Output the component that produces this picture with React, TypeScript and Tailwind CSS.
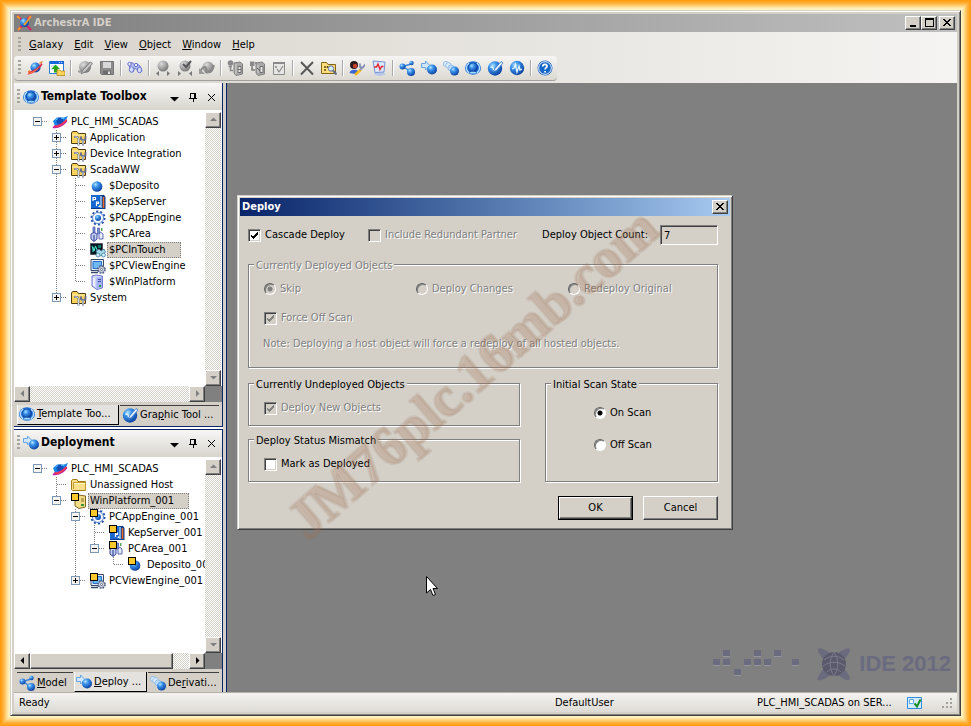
import React, { useState } from "react";

type IconProps = { className?: string };

function Svg({ children, className = "" }: { children: React.ReactNode; className?: string }) {
  return (
    <svg viewBox="0 0 16 16" className={`size-4 shrink-0 ${className}`} aria-hidden="true">
      {children}
    </svg>
  );
}

const icons: Record<string, React.ReactNode> = {
  galaxy: (
    <>
      <circle cx="8.500" cy="7.500" r="5" fill="url(#ball)" />
      <path d="M0.500 14.500C4 15 12 10 15.500 4.500L14.500 3C12 7 6 11.500 2 11.500Z" fill="#e0284a" />
      <path d="M1 13.500C5 13 9 10.500 11 8" stroke="#ff8c3a" strokeWidth="1" fill="none" />
      <path d="M1 12L3 10.500M12.500 3.500L15.500 1.500" stroke="#f08030" strokeWidth="1.500" />
    </>
  ),
  galaxyTree: (
    <>
      <path d="M1 7L5 3.500H12L16 2 13 8 8 12H3Z" fill="#1686e8" />
      <circle cx="8" cy="7" r="3.500" fill="#1250b8" />
      <path d="M3.500 6L6 4.500M9 4L12 4.500" stroke="#5cc8ff" />
      <path d="M0.500 14L2 11.500C6 11.500 12 8 14 5L15.500 7C12 12 6 15 0.500 14Z" fill="#c4209c" />
      <path d="M3 12.500C8 12.500 12 9 14.500 6" stroke="#f43c50" strokeWidth="1.300" fill="none" />
    </>
  ),
  importer: (
    <>
      <path d="M0.500 1.500H14.500V13.500H0.500Z" fill="#fff" stroke="#2c78d8" />
      <path d="M1 1H15V4H1Z" fill="#1768dc" />
      <path d="M10 2.500H14" stroke="#bfe0ff" strokeDasharray="1 1" />
      <path d="M2 6H5M2 9H4" stroke="#a8c8e8" />
      <path d="M6.500 4.500L11 9H8.500C8.500 11.500 9 12 11 12.500H5V9H2.500Z" fill="#25a51d" />
      <path d="M8 10H11L12 11H16V15.500H8Z" fill="#ffd45c" stroke="#b07c10" strokeWidth="0.700" />
    </>
  ),
  editGray: (
    <>
      <circle cx="8" cy="7" r="6" fill="url(#grayBall)" />
      <path d="M1 12C3 14 7 12 9 10L15 3.500 13 1.500 6.500 8C4 11 2 11 1 10Z" fill="#9c9c9c" />
      <path d="M4 14L6 10 13.500 2 15.500 3.500 8.500 11.500Z" fill="#c8c8c8" stroke="#707070" strokeWidth="0.800" />
    </>
  ),
  save: (
    <>
      <path d="M1.500 1.500H14.500V14.500H2.500L1.500 13.500Z" fill="#8c8c8c" stroke="#747474" />
      <path d="M4 2H12V8H4Z" fill="#d8d8d8" />
      <path d="M4 10.500H12V14.500H4Z" fill="#6c6c6c" />
      <path d="M9 11.500H11V14H9Z" fill="#e0e0e0" />
    </>
  ),
  find: (
    <>
      <path d="M2 4L5 2.500 8 5 10 4 13 6 15 11 12 12.500 9.500 9 7.500 8.500 6 12 3 11Z" fill="#b4c0f4" stroke="#6c78cc" />
      <ellipse cx="4.500" cy="9.500" rx="2.200" ry="2.800" fill="#d4dcff" stroke="#6c78cc" />
      <ellipse cx="12.500" cy="10" rx="2.200" ry="2.800" fill="#d4dcff" stroke="#6c78cc" />
      <circle cx="2.500" cy="4" r="1.700" fill="#eef" stroke="#6470c8" />
      <circle cx="9" cy="5" r="1.700" fill="#eef" stroke="#6470c8" />
    </>
  ),
  checkIn: (
    <>
      <circle cx="8" cy="6" r="5.500" fill="url(#grayBall)" />
      <path d="M4 11V16L1 13.500ZM12 11V16L15 13.500Z" fill="#787878" />
    </>
  ),
  checkOut: (
    <>
      <circle cx="8" cy="6" r="5.500" fill="url(#grayBall)" />
      <path d="M1 11V16L4 13.500ZM15 11V16L12 13.500Z" fill="#787878" />
      <path d="M6 4L9 7 14 1" fill="none" stroke="#565656" strokeWidth="2" />
    </>
  ),
  undo: (
    <>
      <circle cx="9" cy="7" r="5.500" fill="url(#grayBall)" />
      <path d="M1 12C3 7 6 6 7 8C8 10 5 12 8 12.500C12 13 14 10 15 5" fill="none" stroke="#8a8a8a" strokeWidth="2" />
      <path d="M0 8V14H6Z" fill="#9a9a9a" />
    </>
  ),
  upload: (
    <>
      <circle cx="3.500" cy="3" r="2.800" fill="#8a8a8a" />
      <path d="M1.500 6.500H5M3.500 7V10.500H6" stroke="#8a8a8a" strokeWidth="1.500" fill="none" />
      <path d="M7 3L13 2 15.500 4V14L9 15.500 7 13Z" fill="#a8a8a8" stroke="#808080" />
      <path d="M9 4V14" stroke="#d0d0d0" />
      <path d="M11 6.500H14V12.500H11Z" fill="#e4e4e4" stroke="#707070" />
      <path d="M11 9.500H14" stroke="#707070" />
    </>
  ),
  assign: (
    <>
      <path d="M1 1.500H5.500V6H1Z" fill="#8a8a8a" />
      <path d="M3 6V10H6M6 3H8" stroke="#7a7a7a" strokeWidth="1.500" fill="none" />
      <path d="M7 3L13 2 15.500 4V14L9 15.500 7 13Z" fill="#a8a8a8" stroke="#808080" />
      <path d="M9 5V13" stroke="#d0d0d0" />
      <path d="M11 6.500H14V12.500H11Z" fill="#e4e4e4" stroke="#707070" />
      <path d="M8 8L11 10.500" stroke="#606060" />
    </>
  ),
  validate: (
    <>
      <path d="M2.500 2.500H13.500V14.500H2.500Z" fill="#e6e6e6" stroke="#8a8a8a" />
      <path d="M2 2H14V4H2Z" fill="#8a8a8a" />
      <path d="M6 9L8 12 12 6M4 7H6M5 6V8" fill="none" stroke="#8a8a8a" strokeWidth="1.200" />
    </>
  ),
  remove: <path d="M2 2L14 14.500M14 2L2 14.500" stroke="#585858" strokeWidth="2" />,
  folderFind: (
    <>
      <path d="M0.500 13.500V2.500H5.500L7 4.500H14.500V13.500Z" fill="#ffdf7c" stroke="#846414" />
      <path d="M3 7H5M3 10H5M6.500 6V8" stroke="#604810" strokeWidth="1.500" />
      <circle cx="10" cy="8.500" r="2.700" fill="#d8ecff" stroke="#60708c" />
      <path d="M12 10.500L15.500 14.500" stroke="#60708c" strokeWidth="2" />
    </>
  ),
  userTools: (
    <>
      <circle cx="5" cy="5" r="4" fill="#2a1c1c" />
      <circle cx="6" cy="6" r="2.200" fill="#c8402c" />
      <path d="M0.500 13C1 9.500 7 9 9 11L6 14Z" fill="#3c66d4" />
      <path d="M6 15L12 9.500" stroke="#f4b818" strokeWidth="2.500" />
      <path d="M11 10L13.500 7.500M11 3.500V7L14 7.500 16 4.500" fill="none" stroke="#7c88b0" strokeWidth="1.600" />
    </>
  ),
  monitor: (
    <>
      <path d="M3 13L13 12 14.500 14.500 9 16 4 15Z" fill="#b8c8e8" />
      <path d="M2 1L14 2 13 12 4 12.500Z" fill="#dce8fc" stroke="#7494d4" />
      <path d="M3 7H5.500L7 4 9 9.500 10.500 6.500H12.500" fill="none" stroke="#e42430" strokeWidth="1.400" />
    </>
  ),
  model: (
    <>
      <path d="M4 6.500L12 4M4 6.500L12 12" stroke="#3c84dc" strokeWidth="1.500" />
      <circle cx="3.500" cy="6.500" r="3" fill="url(#ball)" />
      <circle cx="12.500" cy="3" r="2.200" fill="url(#ball)" />
      <circle cx="12" cy="12" r="4" fill="url(#ball)" />
    </>
  ),
  deploy: (
    <>
      <path d="M0.500 3.500H4.500V1L9 5.500 4.500 10V7.500H0.500Z" fill="#cfe6fc" stroke="#68a4e0" />
      <circle cx="11" cy="9.500" r="5" fill="url(#ball)" />
    </>
  ),
  derive: (
    <>
      <circle cx="3" cy="4" r="2.600" fill="#dcecfc" stroke="#88b4e8" strokeWidth="0.800" />
      <circle cx="5.500" cy="5.500" r="2.800" fill="#dcecfc" stroke="#88b4e8" strokeWidth="0.800" />
      <circle cx="8" cy="8" r="3" fill="#c0dcfc" stroke="#88b4e8" strokeWidth="0.800" />
      <circle cx="11.500" cy="11" r="4.500" fill="url(#ball)" />
    </>
  ),
  template: (
    <>
      <ellipse cx="8" cy="8" rx="8" ry="6.800" fill="#2470d4" />
      <path d="M4 3C0.500 6 0.500 10 4 13M12 3C15.500 6 15.500 10 12 13" fill="none" stroke="#b8e0ff" strokeWidth="1.300" />
      <circle cx="8" cy="7.500" r="4.800" fill="#0a3c9c" />
      <circle cx="8" cy="7.500" r="4.300" fill="url(#ball)" />
      <path d="M4 13.500H12L10 11.800H6Z" fill="#a4dcff" />
    </>
  ),
  graphic: (
    <>
      <circle cx="8" cy="8.500" r="7.200" fill="url(#ball)" />
      <path d="M3.500 7.500C5 6 7 8 6.500 10.500" fill="none" stroke="#e4f4ff" strokeWidth="1.500" />
      <path d="M6 12L8 8.500 14 1.500 16 3 9.500 10.500Z" fill="#e4f2ff" stroke="#2c70c8" strokeWidth="0.800" />
    </>
  ),
  wave: (
    <>
      <circle cx="8" cy="8" r="7.200" fill="url(#ball)" />
      <path d="M3 9L5 8 6.500 4.500 8 12 10 6 11 10 13 9" fill="none" stroke="#e4f4ff" strokeWidth="1.300" />
    </>
  ),
  help: (
    <>
      <circle cx="8" cy="8" r="7.500" fill="#2468c4" />
      <circle cx="8" cy="8" r="6.300" fill="none" stroke="#e8f4ff" strokeWidth="1" />
      <circle cx="8" cy="8" r="5.300" fill="#1468c8" />
      <path d="M5.800 6.500C6 3.500 10.500 4 10 6.500C9.800 7.700 8.200 7.800 8.100 9.500M8.100 11V12.500" fill="none" stroke="#fff" strokeWidth="1.800" />
    </>
  ),
  toolset: (
    <>
      <path d="M0.500 13.500V2.500L2 1.500H6L7.500 3.500H14.500V13.500Z" fill="#fbd25c" stroke="#4c3c10" />
      <path d="M1 5H14" stroke="#fff0b4" />
      <path d="M3 7H6.500L7.500 9V15.500M12 15.500V10M10 6.500V9L12 10.500 14.500 9V6.500" fill="none" stroke="#66708c" strokeWidth="2" />
      <path d="M3.500 7H6.500L7.500 9V15M12 15V10" fill="none" stroke="#e0e6f4" strokeWidth="0.900" />
    </>
  ),
  folder: (
    <>
      <path d="M0.500 12.500V3.500L2 2.500H6L7 4.500H14.500V13.500H1.500Z" fill="#fbe08c" stroke="#a47c14" />
      <path d="M3 6.500H14" stroke="#fff6cc" />
      <path d="M2.500 12V5.500H14.500V13.500" fill="none" stroke="#c89c2c" />
    </>
  ),
  ball: <circle cx="7" cy="8.500" r="5.300" fill="url(#ball)" />,
  server: (
    <>
      <path d="M1 1H14L15.500 3V15H1Z" fill="#0c3c8c" />
      <path d="M1 1H10V14H1Z" fill="#1868d0" />
      <path d="M3 7V3.500H5.500V5.500H3.500M6.500 12V8H8.500V9.500H7M10 11V12.500H8.500" fill="none" stroke="#fff" strokeWidth="1.200" />
      <path d="M11 2V14" stroke="#9cd4ff" strokeWidth="1.500" />
      <path d="M13.500 3V14" stroke="#f46c20" strokeWidth="1.500" />
    </>
  ),
  engine: (
    <>
      <circle cx="8" cy="8" r="6.600" fill="none" stroke="#2450a8" strokeWidth="1.800" strokeDasharray="2.100 2.047" />
      <circle cx="8" cy="8" r="5.500" fill="#f4f8ff" stroke="#4878c4" strokeWidth="0.900" />
      <circle cx="8" cy="8" r="3" fill="url(#ball)" />
    </>
  ),
  area: (
    <>
      <path d="M3 1H5V7H3ZM7.500 2H9.500V8H7.500Z" fill="#7890d4" stroke="#4858a8" strokeWidth="0.700" />
      <path d="M1 8L4 6.500 7 8V13L4 15.500 1 13Z" fill="#c4d0f4" stroke="#3c489c" />
      <path d="M9 8.500L10.500 6 13 8V13H9Z" fill="#e8ecfc" stroke="#5c68b4" />
      <path d="M11 2H12.500V5H11Z" fill="#58a858" />
      <path d="M4 9V15" stroke="#283488" />
    </>
  ),
  intouch: (
    <>
      <path d="M0.500 1.500H12.500V12.500H0.500Z" fill="#001820" stroke="#556" />
      <path d="M2 4L4 9 5.500 4 7 8M3 5V10" stroke="#48f0d8" fill="none" />
      <path d="M8 3H11V6H8Z" fill="#0c7868" />
      <path d="M6 9L9 7 11 9 14 7 15.500 10 13 13 10 14 7 12Z" fill="#a8dcec" stroke="#387090" strokeWidth="0.800" />
      <circle cx="8" cy="13" r="2" fill="#c8ecf8" stroke="#387090" strokeWidth="0.700" />
      <circle cx="13.500" cy="13" r="2" fill="#c8ecf8" stroke="#387090" strokeWidth="0.700" />
    </>
  ),
  viewEngine: (
    <>
      <path d="M1 1.500H13.500V12.500H1Z" fill="#e8eef8" stroke="#384868" />
      <path d="M3 3.500H11.500V10.500H3Z" fill="#70b8f4" stroke="#2470c8" />
      <path d="M1 14.500H8" stroke="#384868" strokeWidth="1.500" />
      <circle cx="11.500" cy="11.500" r="3.500" fill="#e4e8f0" stroke="#505c80" strokeWidth="1.700" strokeDasharray="1.700 1.049" />
      <circle cx="11.500" cy="11.500" r="2.900" fill="#f0f2f8" stroke="#505c80" strokeWidth="0.700" />
      <circle cx="11.500" cy="11.500" r="1.100" fill="#fff" stroke="#505c80" />
    </>
  ),
  platform: (
    <>
      <path d="M2 2L6 1 12.500 2V14L7 15.500 2 12Z" fill="#d0d6fc" stroke="#7078cc" />
      <path d="M6.500 3.500L12 3V14L6.500 15Z" fill="#a4b0f0" />
      <path d="M8 5.500H11M8 7.500H11" stroke="#4450a8" />
      <path d="M9 11H11V13H9Z" fill="#2ca04c" />
      <path d="M4 4V12" stroke="#f8f8ff" strokeWidth="1.500" />
    </>
  ),
  platformYellow: (
    <>
      <path d="M4 4L8 2 14.500 3V14L8 15.500 4 13Z" fill="#f0dc84" stroke="#80681c" />
      <path d="M10 6H13M10 8H13" stroke="#806c20" />
      <path d="M10 11H13V13H10Z" fill="#40903c" />
    </>
  ),
  app: (
    <>
      <path d="M1 1C4 2 12 12 15 15M2 15C5 13 11 3 15 1" stroke="#d8246c" strokeWidth="2.200" fill="none" />
      <circle cx="8.500" cy="7.500" r="4.500" fill="url(#ball)" />
      <path d="M8 10C12 6 13 3 15 1M1 1L4 3.500M2 15L4.500 12.500" stroke="#ff9c24" strokeWidth="1.800" fill="none" />
    </>
  ),
  status: (
    <>
      <path d="M0.500 2.500H14.500V13.500H0.500Z" fill="#d4ecfc" stroke="#2c8ce0" />
      <path d="M2.500 4.500H6.500V8.500H2.500Z" fill="#fff" stroke="#60a8e8" />
      <path d="M7.500 8.500L10 11.500 13.500 4.500" fill="none" stroke="#188c24" strokeWidth="2" />
    </>
  ),
};

function Icon({ name, className }: { name: string } & IconProps) {
  return <Svg className={className}>{icons[name]}</Svg>;
}

function Defs() {
  return (
    <svg className="absolute size-0" aria-hidden="true">
      <defs>
        <radialGradient id="ball" cx="0.350" cy="0.300" r="0.750">
          <stop offset="0" stopColor="#b4e4ff" />
          <stop offset="0.350" stopColor="#3c94ec" />
          <stop offset="1" stopColor="#0a3c9c" />
        </radialGradient>
        <radialGradient id="grayBall" cx="0.350" cy="0.300" r="0.750">
          <stop offset="0" stopColor="#dcdcdc" />
          <stop offset="1" stopColor="#757575" />
        </radialGradient>
      </defs>
    </svg>
  );
}

const raised =
  "border border-t-white border-l-white border-r-[#404040] border-b-[#404040] bg-[#d4d0c8] shadow-[inset_-1px_-1px_0_#808080]";

function WindowButton({ label, children }: { label: string; children: React.ReactNode }) {
  return (
    <button aria-label={label} className={`flex h-[14px] w-4 items-center justify-center ${raised}`}>
      <svg viewBox="0 0 12 10" className="h-[10px] w-3" fill="none" stroke="#000" shapeRendering="crispEdges">
        {children}
      </svg>
    </button>
  );
}

const closeCross = <path d="M2 1H4V2H5V3H7V2H8V1H10V2H9V3H8V4H7V5H8V6H9V7H10V8H8V7H7V6H5V7H4V8H2V7H3V6H4V5H5V4H4V3H3V2H2Z" fill="#000" stroke="none" />;

function Grip() {
  return <span className="h-4 w-[3px] shrink-0 bg-[repeating-linear-gradient(#a8a49c_0_2px,transparent_2px_4px)]" />;
}

// null is a separator
const tools: ([string, string] | null)[] = [
  ["galaxy", "Open galaxy"],
  ["importer", "Import"],
  null,
  ["editGray", "Edit"],
  ["save", "Save"],
  null,
  ["find", "Find"],
  null,
  ["checkIn", "Check in"],
  ["checkOut", "Check out"],
  ["undo", "Undo check out"],
  null,
  ["upload", "Upload"],
  ["assign", "Assign"],
  ["validate", "Validate"],
  null,
  ["remove", "Delete"],
  ["folderFind", "Properties"],
  null,
  ["userTools", "Configure"],
  ["monitor", "Monitor"],
  null,
  ["model", "Model view"],
  ["deploy", "Deployment view"],
  ["derive", "Derivation view"],
  ["template", "Template toolbox"],
  ["graphic", "Graphic toolbox"],
  ["wave", "Operations"],
  null,
  ["help", "Help"],
];

type Node = {
  label: string;
  icon: string;
  guides: string; // one char per column: v = line, t = tee, l = corner, r = root, . = empty
  box?: "+" | "-";
  selected?: boolean;
  deployed?: boolean;
};

const templates: Node[] = [
  { label: "PLC_HMI_SCADAS", icon: "galaxyTree", guides: "r", box: "-" },
  { label: "Application", icon: "toolset", guides: ".t", box: "+" },
  { label: "Device Integration", icon: "toolset", guides: ".t", box: "+" },
  { label: "ScadaWW", icon: "toolset", guides: ".t", box: "-" },
  { label: "$Deposito", icon: "ball", guides: ".vt" },
  { label: "$KepServer", icon: "server", guides: ".vt" },
  { label: "$PCAppEngine", icon: "engine", guides: ".vt" },
  { label: "$PCArea", icon: "area", guides: ".vt" },
  { label: "$PCInTouch", icon: "intouch", guides: ".vt", selected: true },
  { label: "$PCViewEngine", icon: "viewEngine", guides: ".vt" },
  { label: "$WinPlatform", icon: "platform", guides: ".vl" },
  { label: "System", icon: "toolset", guides: ".l", box: "+" },
];

const deployment: Node[] = [
  { label: "PLC_HMI_SCADAS", icon: "galaxyTree", guides: "r", box: "-" },
  { label: "Unassigned Host", icon: "folder", guides: ".t" },
  { label: "WinPlatform_001", icon: "platformYellow", guides: ".l", box: "-", selected: true, deployed: true },
  { label: "PCAppEngine_001", icon: "engine", guides: "..t", box: "-", deployed: true },
  { label: "KepServer_001", icon: "server", guides: "..vt", deployed: true },
  { label: "PCArea_001", icon: "area", guides: "..vl", box: "-", deployed: true },
  { label: "Deposito_001", icon: "ball", guides: "..v.l", deployed: true },
  { label: "PCViewEngine_001", icon: "viewEngine", guides: "..l", box: "+", deployed: true },
];

function Guide({ kind, box }: { kind: string; box?: "+" | "-" }) {
  const vertical: Record<string, string> = { v: "M9.500 0V16", t: "M9.500 0V16", l: "M9.500 0V8" };
  return (
    <svg viewBox="0 0 19 16" className="h-4 w-[19px] shrink-0 overflow-visible" shapeRendering="crispEdges">
      {vertical[kind] && <path d={vertical[kind]} stroke="#808080" strokeDasharray="1 1" />}
      {"tlr".includes(kind) && <path d="M10 7.500H20" stroke="#808080" strokeDasharray="1 1" />}
      {box && (
        <>
          <path d="M5.500 3.500H13.500V11.500H5.500Z" fill="#f4f3f0" stroke="#7c98b4" />
          <path d={box === "+" ? "M7 7.500H12M9.500 5V10" : "M7 7.500H12"} stroke="#000" />
        </>
      )}
    </svg>
  );
}

function Tree({ nodes }: { nodes: Node[] }) {
  return (
    <ul className="min-w-0 flex-1 overflow-hidden bg-white pt-1 pl-[14px]">
      {nodes.map((node) => (
        <li key={node.label} className="flex h-4 items-center whitespace-nowrap">
          {node.guides.split("").map((kind, i) => (
            <Guide key={i} kind={kind} box={i === node.guides.length - 1 ? node.box : undefined} />
          ))}
          <span className="relative ml-[5px] flex">
            <Icon name={node.icon} />
            {node.deployed && <span className="absolute top-0 left-0 size-2 border border-black bg-[#ffc82c]" />}
          </span>
          <span
            className={
              node.selected
                ? "ml-px h-4 border border-dotted border-[#808080] bg-[#d4d0c8] pr-[14px] pl-px leading-[14px]"
                : "ml-[3px] leading-4"
            }
          >
            {node.label}
          </span>
        </li>
      ))}
    </ul>
  );
}

const track = "bg-[repeating-conic-gradient(#d4d0c8_0_25%,#ffffff_0_50%)] bg-[length:2px_2px]";

function ScrollButton({ dir, dark }: { dir: "up" | "down" | "left" | "right"; dark?: boolean }) {
  const paths = {
    up: "M4 8H11L7.500 4.500Z",
    down: "M4 5H11L7.500 8.500Z",
    left: "M9 3V10L5.500 6.500Z",
    right: "M6 3V10L9.500 6.500Z",
  };
  return (
    <button aria-label={`Scroll ${dir}`} className={`size-4 shrink-0 ${raised}`}>
      <svg viewBox="0 0 14 14" className="size-[14px]">
        <path d={paths[dir]} fill={dark ? "#000" : "#808080"} />
      </svg>
    </button>
  );
}

function Panel({
  title,
  icon,
  nodes,
  thumb,
  className,
  children,
}: {
  title: string;
  icon: string;
  nodes: Node[];
  thumb?: boolean;
  className: string;
  children: React.ReactNode;
}) {
  return (
    <section className={`flex min-h-0 flex-col ${className}`}>
      <header className="flex h-[27px] shrink-0 items-center bg-linear-to-b from-[#f8f7f6] to-[#d8d5ce] pr-[2px] pl-[3px]">
        <Grip />
        <Icon name={icon} className="ml-[3px]" />
        <h2 className="ml-[2px] flex-1 pb-[2px] text-[12px] font-bold">{title}</h2>
        <button aria-label="Menu" className="w-[18px]">
          <svg viewBox="0 0 18 16" className="h-4 w-[18px]">
            <path d="M4 8H13L8.500 12.500Z" />
          </svg>
        </button>
        <button aria-label="Auto hide" className="w-[18px]">
          <svg viewBox="0 0 18 16" className="h-4 w-[18px]" fill="none" stroke="#000" shapeRendering="crispEdges">
            <path d="M6.500 9V4.500H11.500V9M10.500 4V9M5 9.500H13M9.500 9V13" />
          </svg>
        </button>
        <button aria-label="Close" className="w-[18px]">
          <svg viewBox="0 0 18 16" className="h-4 w-[18px]" stroke="#000">
            <path d="M6 5L13 12M13 5L6 12" />
          </svg>
        </button>
      </header>
      <div className="flex min-h-0 flex-1 bg-white pr-px">
        <Tree nodes={nodes} />
        <div className={`mt-[2px] flex w-4 flex-col justify-between ${track}`}>
          <ScrollButton dir="up" />
          <ScrollButton dir="down" />
        </div>
      </div>
      <div className="flex h-4 shrink-0 bg-[#808080] pr-[17px]">
        <div className={`flex flex-1 ${track}`}>
          <ScrollButton dir="left" dark={thumb} />
          <div className="flex-1">{thumb && <div className={`h-4 w-[90%] ${raised}`} />}</div>
          <ScrollButton dir="right" dark={thumb} />
        </div>
      </div>
      {children}
    </section>
  );
}

function Tab({ icon, active, className, children }: { icon: string; active?: boolean; className: string; children: React.ReactNode }) {
  return (
    <button
      className={`flex items-center gap-[2px] overflow-hidden whitespace-nowrap ${
        active ? "border-r border-b border-l border-black border-l-white bg-[#e4e2de] pl-px" : "border-t border-t-[#404040] pl-[2px]"
      } ${className}`}
    >
      <Icon name={icon} />
      <span>{children}</span>
    </button>
  );
}

const disabledText = "text-[#808080] [text-shadow:1px_1px_0_#fff]";

function CheckBox({ label, checked, disabled }: { label: string; checked?: boolean; disabled?: boolean }) {
  const [on, setOn] = useState(!!checked);
  return (
    <label className={`flex h-[14px] items-center gap-1 ${disabled ? disabledText : ""}`}>
      <span className="relative flex">
        <input
          type="checkbox"
          checked={on}
          disabled={disabled}
          onChange={() => setOn(!on)}
          className="size-[13px] appearance-none border border-t-[#808080] border-r-white border-b-white border-l-[#808080] bg-white shadow-[inset_1px_1px_0_#404040,inset_-1px_-1px_0_#d4d0c8] disabled:bg-[#d4d0c8]"
        />
        {on && (
          <svg viewBox="0 0 13 13" className="pointer-events-none absolute inset-0 size-[13px]" shapeRendering="crispEdges">
            <path d="M3 5V8L5 10 10 5V3L5 7.500Z" fill={disabled ? "#808080" : "#000"} />
          </svg>
        )}
      </span>
      {label}
    </label>
  );
}

function Radio({ label, name, checked, disabled }: { label: string; name: string; checked?: boolean; disabled?: boolean }) {
  return (
    <label className={`flex h-[14px] items-center gap-1 ${disabled ? disabledText : ""}`}>
      <input
        type="radio"
        name={name}
        defaultChecked={checked}
        disabled={disabled}
        className="size-3 appearance-none rounded-full border border-t-[#606060] border-r-white border-b-white border-l-[#606060] bg-white shadow-[inset_1px_1px_0_#808080] checked:bg-[radial-gradient(circle,#000_2px,#fff_3px)] disabled:bg-[#d4d0c8] disabled:checked:bg-[radial-gradient(circle,#808080_2px,#d4d0c8_3px)]"
      />
      {label}
    </label>
  );
}

function Group({ title, disabled, className, children }: { title: string; disabled?: boolean; className: string; children: React.ReactNode }) {
  return (
    <fieldset className={`relative border border-[#808080] shadow-[1px_1px_0_#fff,inset_1px_1px_0_#fff] ${className}`}>
      <legend className={`absolute -top-2 left-[5px] bg-[#d4d0c8] px-[2px] leading-[18px] ${disabled ? disabledText : ""}`}>{title}</legend>
      {children}
    </fieldset>
  );
}

function DeployDialog() {
  return (
    <div
      role="dialog"
      aria-label="Deploy"
      className="absolute top-[112px] left-[10px] w-[496px] border border-t-[#d4d0c8] border-r-[#404040] border-b-[#404040] border-l-[#d4d0c8] bg-[#d4d0c8] p-[2px] pb-[9px] shadow-[inset_1px_1px_0_#fff,inset_-1px_-1px_0_#808080]"
    >
      <div className="flex h-[18px] items-center justify-between bg-linear-to-r from-[#0a246a] to-[#a6caf0] px-[2px]">
        <h1 className="font-bold text-white">Deploy</h1>
        <WindowButton label="Close dialog">{closeCross}</WindowButton>
      </div>
      <div className="pt-[9px] pr-3 pl-2">
        <div className="flex h-5 items-center">
          <div className="w-[120px]">
            <CheckBox label="Cascade Deploy" checked />
          </div>
          <CheckBox label="Include Redundant Partner" disabled />
          <label htmlFor="count" className="mr-3 ml-auto">
            Deploy Object Count:
          </label>
          <input
            id="count"
            readOnly
            value="7"
            className="h-5 w-[58px] border border-t-[#808080] border-r-white border-b-white border-l-[#808080] bg-[#d4d0c8] pl-[3px] shadow-[inset_1px_1px_0_#404040]"
          />
        </div>
        <Group title="Currently Deployed Objects" disabled className="mt-[19px] h-[104px] px-[15px] pt-[17px]">
          <div className="grid grid-cols-[152px_152px_auto]">
            <Radio name="deployed" label="Skip" checked disabled />
            <Radio name="deployed" label="Deploy Changes" disabled />
            <Radio name="deployed" label="Redeploy Original" disabled />
          </div>
          <div className="mt-[15px]">
            <CheckBox label="Force Off Scan" checked disabled />
          </div>
          <p className={`mt-3 -ml-px whitespace-nowrap leading-[14px] ${disabledText}`}>
            Note: Deploying a host object will force a redeploy of all hosted objects.
          </p>
        </Group>
        <div className="mt-[15px] flex justify-between">
          <div className="flex w-[272px] flex-col gap-[13px]">
            <Group title="Currently Undeployed Objects" className="h-[43px] px-[15px] pt-[17px]">
              <CheckBox label="Deploy New Objects" checked disabled />
            </Group>
            <Group title="Deploy Status Mismatch" className="h-[43px] px-[15px] pt-[17px]">
              <CheckBox label="Mark as Deployed" />
            </Group>
          </div>
          <Group title="Initial Scan State" className="flex w-[173px] flex-col gap-[18px] pt-[22px] pl-12">
            <Radio name="scan" label="On Scan" checked />
            <Radio name="scan" label="Off Scan" />
          </Group>
        </div>
        <div className="mt-[14px] flex justify-end gap-[10px]">
          <button className="h-6 w-[75px] border border-black">
            <span className={`flex h-full items-center justify-center ${raised}`}>OK</span>
          </button>
          <button className={`h-6 w-[75px] ${raised}`}>Cancel</button>
        </div>
      </div>
    </div>
  );
}

function Watermark() {
  return (
    <span className="pointer-events-none absolute top-[260px] left-[0px] w-[490px] origin-center rotate-[-41deg] text-center font-['Liberation_Serif'] text-[56px] leading-[60px] font-bold whitespace-nowrap text-[#a87858]/20 [-webkit-text-stroke:3px_rgba(150,105,75,0.14)] [text-shadow:2px_2px_0_rgba(150,110,80,0.1)]">
      JM76plc.16mb.com
    </span>
  );
}

function Brand() {
  const dots = [
    [0, 9], [10, 9], [10, 0], [21, 19], [31, 9], [41, 9], [41, 0], [51, 9], [61, 0], [79, 9],
  ];
  return (
    <div className="absolute right-[6px] bottom-[10px] flex items-center text-[#6b6b80]">
      <svg viewBox="0 0 90 28" className="h-7 w-[90px]" fill="currentColor">
        {dots.map(([x, y]) => (
          <g key={`${x}-${y}`}>
            <rect x={x} y={y} width="7" height="6" />
            <rect x={x} y={y + 6} width="7" height="1" fill="#95959f" />
          </g>
        ))}
      </svg>
      <svg viewBox="0 0 34 36" className="ml-[14px] h-9 w-[34px]" fill="currentColor">
        <path d="M1 3C3 0 13 6 21 15C29 24 35 32 32 34C29 35 20 30 12 20C5 12 0 6 1 3Z" />
        <path d="M33 3C31 0 21 6 13 15C5 24 -1 32 1 34C4 36 14 30 22 20C29 12 34 6 33 3Z" />
        <circle cx="17" cy="18" r="12" fill="#5a5a6c" />
        <path d="M7 14C13 9 21 9 27 14M6 20C13 15 21 15 28 20M10 26C14 22 20 22 24 26M17 6C12 13 12 23 17 30M17 6C22 13 22 23 17 30" fill="none" stroke="#7b7b8c" />
      </svg>
      <span className="ml-2 font-['Liberation_Sans'] text-[22px] leading-8 font-bold">IDE 2012</span>
    </div>
  );
}

const menus = ["Galaxy", "Edit", "View", "Object", "Window", "Help"];

export default function App() {
  return (
    <div className="flex h-screen min-h-[600px] flex-col bg-[#fff3c4] p-[10px] font-['DejaVu_Sans_Condensed','DejaVu_Sans',sans-serif] text-[11px] leading-[14px] text-black shadow-[inset_0_0_0_1px_#ff9c12,inset_0_0_0_2px_#ffa21c,inset_0_0_0_3px_#ffaa2c,inset_0_0_0_4px_#ffb440,inset_0_0_0_5px_#ffc058,inset_0_0_0_6px_#ffcc70,inset_0_0_0_7px_#ffd888,inset_0_0_0_8px_#ffe4a0,inset_0_0_0_9px_#ffeeb4]">
      <Defs />
      <div className="flex min-h-0 flex-1 flex-col border border-t-[#d4d0c8] border-r-[#404040] border-b-[#404040] border-l-[#d4d0c8] bg-[#d4d0c8] p-[3px] shadow-[inset_1px_1px_0_#fff,inset_-1px_-1px_0_#808080]">
        <div className="flex h-[18px] shrink-0 items-center bg-linear-to-r from-[#808080] to-[#c0c0c0] pr-[2px] pl-[2px]">
          <Icon name="app" />
          <h1 className="ml-[2px] flex-1 font-bold text-[#d4d0c8]">ArchestrA IDE</h1>
          <WindowButton label="Minimize">
            <path d="M3 7.500H9M3 8.500H9" />
          </WindowButton>
          <WindowButton label="Maximize">
            <path d="M2.500 1V8.500H10.500V1.500H2M2 0.500H11" />
          </WindowButton>
          <span className="w-[2px]" />
          <WindowButton label="Close">{closeCross}</WindowButton>
        </div>

        <div className="h-[51px] shrink-0 bg-linear-to-r from-[#d8d4cc] to-[#f5f4f2]">
          <nav className="flex h-6 items-center pt-px pl-1">
            <Grip />
            <div className="ml-2 flex gap-[11px]">
              {menus.map((menu) => (
                <button key={menu}>
                  <u>{menu[0]}</u>
                  {menu.slice(1)}
                </button>
              ))}
            </div>
          </nav>
          <div className="flex h-[25px] w-[543px] items-center rounded border-b border-[#a0a0a0] bg-linear-to-b from-[#f6f5f3] to-[#dcd9d2] pl-1">
            <Grip />
            <div className="ml-[3px] flex items-center">
              {tools.map((tool, i) =>
                tool ? (
                  <button key={i} aria-label={tool[1]} className="flex w-[22px] justify-center">
                    <Icon name={tool[0]} />
                  </button>
                ) : (
                  <span key={i} className="mr-[3px] ml-[2px] h-4 w-px bg-[#a8a8a8] shadow-[1px_0_0_#fff]" />
                )
              )}
            </div>
          </div>
        </div>

        <div className="flex min-h-0 flex-1">
          <aside className="flex w-[213px] shrink-0 flex-col border-r border-[#0a246a] pr-[3px]">
            <Panel title="Template Toolbox" icon="template" nodes={templates} className="flex-[344] border-r border-b border-[#0a246a]">
              <div className="flex h-6 shrink-0 gap-px bg-[#d4d0c8] px-[3px] pt-[3px] pb-px">
                <Tab icon="template" active className="w-[102px]">
                  <u>T</u>emplate Too...
                </Tab>
                <Tab icon="graphic" className="flex-1">
                  Gra<u>p</u>hic Tool ...
                </Tab>
              </div>
            </Panel>
            <div className="h-[2px] bg-white" />
            <Panel title="Deployment" icon="deploy" nodes={deployment} thumb className="flex-[263] border-t border-r border-[#0a246a]">
              <div className="flex h-[23px] shrink-0 gap-px bg-[#d4d0c8] px-[3px] pt-[3px]">
                <Tab icon="model" className="w-[56px]">
                  <u>M</u>odel
                </Tab>
                <Tab icon="deploy" active className="w-[73px]">
                  <u>D</u>eploy ...
                </Tab>
                <Tab icon="derive" className="flex-1">
                  De<u>r</u>ivati...
                </Tab>
              </div>
            </Panel>
          </aside>
          <main className="relative min-w-0 flex-1 overflow-hidden bg-[#808080]">
            <Brand />
            <DeployDialog />
            <Watermark />
            <svg viewBox="0 0 12 20" className="absolute top-[493px] left-[199px] h-5 w-3">
              <path d="M0.500 0.500V17L4.500 13.500 7 19.500 9.500 18.500 7 12.500H11.500Z" fill="#fff" stroke="#000" />
            </svg>
          </main>
        </div>

        <footer className="flex h-5 shrink-0 items-center border-t border-[#b4b0a8] bg-linear-to-b from-[#f4f3f1] to-[#dedbd5] pr-1 pl-[5px]">
          <span className="flex-[536]">Ready</span>
          <span className="flex-[202]">DefaultUser</span>
          <span className="w-[150px] whitespace-nowrap">PLC_HMI_SCADAS on SER...</span>
          <Icon name="status" />
          <svg viewBox="0 0 12 12" className="ml-[18px] size-3" fill="#a4a09a">
            <path d="M9 1H11V3H9ZM9 5H11V7H9ZM9 9H11V11H9ZM5 5H7V7H5ZM5 9H7V11H5ZM1 9H3V11H1Z" />
          </svg>
        </footer>
      </div>
    </div>
  );
}
